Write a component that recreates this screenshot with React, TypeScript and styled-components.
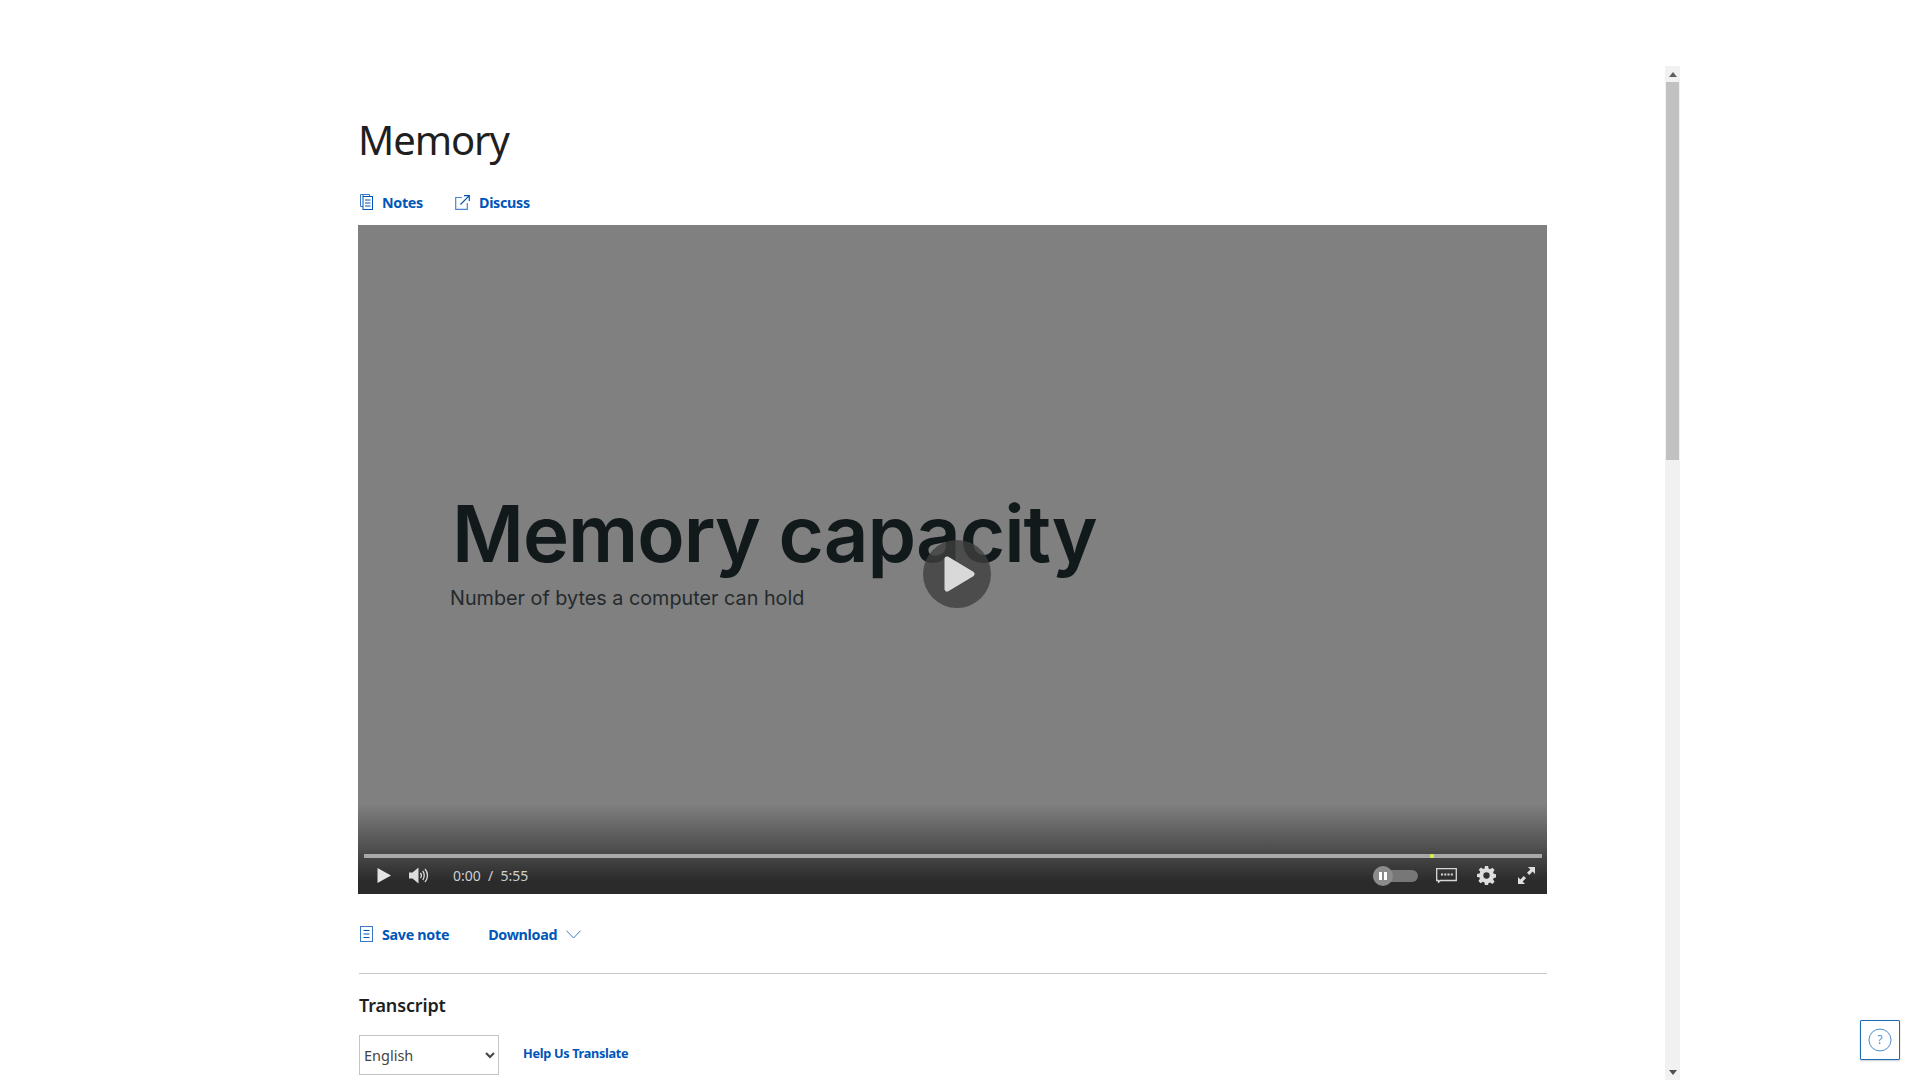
import styled, { createGlobalStyle } from 'styled-components'

const GlobalStyle = createGlobalStyle`
  * {
    box-sizing: border-box;
  }

  html,
  body {
    margin: 0;
    height: 100%;
    background-color: #ffffff;
    overflow: hidden;
    font-family: 'Noto Sans', 'Open Sans', sans-serif;
  }
`

const Pagina = styled.div`
  display: flex;
  width: 1440px;
  height: 1080px;
  margin: 0 auto;
  padding-top: 66px;
`

const Painel = styled.main`
  flex: 1;
  overflow: hidden;
  padding-left: 118px;
`

const BarraRolagem = styled.div`
  display: flex;
  flex-direction: column;
  width: 15px;
  background-color: #f1f1f1;
`

const SetaRolagem = styled.div`
  display: flex;
  align-items: center;
  justify-content: center;
  height: 16px;
`

const Polegar = styled.div`
  width: 13px;
  height: 378px;
  margin-left: 1px;
  background-color: #c1c1c1;
`

const TrilhaRolagem = styled.div`
  flex: 1;
`

const Conteudo = styled.div`
  width: 1189px;
  padding-top: 49px;
`

const Titulo = styled.h1`
  margin: 0;
  font-size: 40px;
  line-height: 50px;
  font-weight: 400;
  letter-spacing: -1.1px;
  color: #1f1f1f;
`

const BarraLinks = styled.div<{ $gap: number; $topo: number }>`
  display: flex;
  align-items: center;
  gap: ${(p) => p.$gap}px;
  margin-top: ${(p) => p.$topo}px;
  height: 24px;
  padding-left: 2px;
`

const LinkAcao = styled.a`
  display: flex;
  align-items: center;
  gap: 9px;
  font-size: 14.3px;
  font-weight: 700;
  letter-spacing: -0.3px;
  color: #0056b8;
  text-decoration: none;
  cursor: pointer;
`

const Video = styled.section`
  position: relative;
  margin-top: 11px;
  height: 669px;
  background-color: #808080;
  overflow: hidden;
`

const Slide = styled.div`
  position: absolute;
  left: 94px;
  top: 261px;
  color: #12191b;
`

const SlideTitulo = styled.div`
  font-family: Inter, sans-serif;
  font-size: 78px;
  line-height: 96px;
  font-weight: 600;
  letter-spacing: -1px;
`

const SlideSub = styled.div`
  font-family: Inter, sans-serif;
  font-size: 19.8px;
  line-height: 24px;
  margin-top: 4px;
  margin-left: -2px;
  color: #242a2c;
`

const BotaoPlay = styled.button`
  position: absolute;
  left: 565px;
  top: 315px;
  width: 68px;
  height: 68px;
  border: none;
  border-radius: 50%;
  padding: 0 0 0 4px;
  background-color: rgba(62, 62, 62, 0.8);
  display: flex;
  align-items: center;
  justify-content: center;
`

const Controles = styled.div`
  position: absolute;
  left: 0;
  right: 0;
  bottom: 0;
  height: 90px;
  background: linear-gradient(to bottom, rgba(43, 43, 43, 0), #2b2b2b 85%);
  display: flex;
  flex-direction: column;
  justify-content: flex-end;
`

const Progresso = styled.div`
  position: relative;
  height: 4px;
  margin: 0 5px 0 6px;
  background-color: #a8a8a8;
`

const Marcador = styled.span`
  position: absolute;
  top: 0;
  height: 4px;
  width: 4px;
  background-color: #d8e94a;
`

const LinhaControles = styled.div`
  display: flex;
  align-items: center;
  height: 36px;
  padding: 0 12px 1px 19px;
`

const BotaoIcone = styled.span<{ $margem?: number }>`
  display: flex;
  align-items: center;
  justify-content: center;
  margin-left: ${(p) => p.$margem ?? 0}px;
`

const Tempo = styled.span`
  margin-left: 23px;
  font-size: 14px;
  color: #cfcfcf;
  white-space: pre;
`

const Espaco = styled.div`
  flex: 1;
`

const Alternador = styled.div`
  position: relative;
  width: 45px;
  height: 12px;
  border-radius: 6px;
  background-color: #777777;
`

const Pino = styled.span`
  position: absolute;
  left: 0;
  top: -4px;
  width: 20px;
  height: 20px;
  border-radius: 50%;
  background-color: #8c8c8c;
  display: flex;
  align-items: center;
  justify-content: center;
  gap: 2px;

  &::before,
  &::after {
    content: '';
    width: 3px;
    height: 8px;
    background-color: #ffffff;
  }
`

const Divisor = styled.hr`
  margin: 27px 0 0 1px;
  border: none;
  border-top: 1px solid #c8c8c8;
`

const Subtitulo = styled.h2`
  margin: 17px 0 0 1px;
  font-size: 18px;
  line-height: 28px;
  font-weight: 600;
  letter-spacing: -0.15px;
  color: #1f1f1f;
`

const LinhaIdioma = styled.div`
  display: flex;
  align-items: center;
  gap: 24px;
  margin: 16px 0 0 1px;
`

const SeletorIdioma = styled.select`
  width: 140px;
  height: 40px;
  border: 1px solid #c4c4c4;
  background-color: #ffffff;
  font-family: 'Noto Sans', sans-serif;
  font-size: 14.5px;
  color: #444444;
  padding: 0;
`

const LinkTraducao = styled.a`
  margin-top: -4px;
  font-size: 12.7px;
  font-weight: 700;
  letter-spacing: -0.3px;
  color: #0056b8;
  cursor: pointer;
`

const BotaoAjuda = styled.button`
  position: fixed;
  left: 1860px;
  top: 1020px;
  width: 40px;
  height: 40px;
  padding: 0;
  background-color: #ffffff;
  border: 1px solid #1d69b4;
  border-radius: 1px;
  box-shadow: 0 1px 2px rgba(0, 0, 0, 0.2);
  display: flex;
  align-items: center;
  justify-content: center;
`

const IconeNotas = () => (
  <svg width="13" height="16" viewBox="0 0 13 16" fill="none" stroke="#3b78c6" strokeWidth="1">
    <path d="M3 2.500V.5H9.500V2.500M3 12.500H.5V.5H3" />
    <rect x="3" y="2.500" width="9.500" height="13" stroke="#0056b8" />
    <path d="M5 6h5.500M5 9h5.500M5 12h5.500" stroke="#0056b8" />
  </svg>
)

const IconeExterno = () => (
  <svg width="15" height="15" viewBox="0 0 15 15" fill="none" stroke="#4a86cf" strokeWidth="1.2">
    <path d="M7 2.500H.7v11.800h11.600V8" />
    <path d="M5.500 9.500L13.800 1.200M9 .7h5.300V6" stroke="#0056b8" />
  </svg>
)

const IconeNota = () => (
  <svg width="13" height="16" viewBox="0 0 13 16" fill="none" stroke="#0056b8" strokeWidth="1">
    <rect x=".5" y=".5" width="12" height="15" stroke="#3b78c6" />
    <path d="M3.500 4.500h6M3.500 8h6M3.500 11.500h6" />
  </svg>
)

const IconeSeta = () => (
  <svg width="15" height="9" viewBox="0 0 15 9" fill="none" stroke="#3b78c6" strokeWidth="1">
    <path d="M.5 .7L7.500 8l7-7.300" />
  </svg>
)

const IconePlayGrande = () => (
  <svg width="31" height="36" viewBox="0 0 31 36">
    <path d="M3 3L28 18 3 33z" fill="#d9d9d9" stroke="#d9d9d9" strokeWidth="5" strokeLinejoin="round" />
  </svg>
)

const IconePlay = () => (
  <svg width="14" height="15" viewBox="0 0 14 15">
    <path d="M.5 0L14 7.500.5 15z" fill="#e4e4e4" />
  </svg>
)

const IconeVolume = () => (
  <svg width="21" height="17" viewBox="0 0 21 17" fill="none">
    <path d="M0 5.500h3.500L9.500 .5v16l-6-5H0z" fill="#dddddd" />
    <path d="M11.500 6c1 1.400 1 3.600 0 5M13.700 4c2 2.500 2 6.500 0 9M16 2c3.300 3.600 3.300 9.400 0 13" stroke="#dddddd" strokeWidth="1.300" />
  </svg>
)

const IconeLegenda = () => (
  <svg width="21" height="15" viewBox="0 0 21 15" fill="none">
    <path d="M20.300 .7H.7v11.800h1.800v1.800l1.800-1.800h16z" stroke="#d8d8d8" strokeWidth="1.300" />
    <path d="M5 6.500h2M8.300 6.500h2M11.500 6.500h2M14.800 6.500h2" stroke="#d8d8d8" strokeWidth="2" />
  </svg>
)

const IconeEngrenagem = () => (
  <svg width="19" height="19" viewBox="0 0 24 24">
    <path
      fillRule="evenodd"
      fill="#dedede"
      d="M10 0h4l.6 3.300 2 .8L19.400 2.200l2.800 2.800-1.900 2.800.8 2 3.300.6v4l-3.300.6-.8 2 1.900 2.800-2.800 2.800-2.800-1.900-2 .8L14 24h-4l-.6-3.300-2-.8-2.800 1.900-2.800-2.800 1.900-2.800-.8-2L0 14v-4l3.300-.6.8-2L2.200 4.600 5 1.800l2.800 1.900 2-.8zM12 8a4 4 0 1 0 0 8 4 4 0 0 0 0-8z"
    />
  </svg>
)

const IconeTelaCheia = () => (
  <svg width="17" height="17" viewBox="0 0 17 17" fill="#dedede">
    <path d="M10 0h7v7l-2.400-2.400-3.400 3.400-2.200-2.200 3.400-3.400zM7 17H0v-7l2.400 2.400 3.400-3.400 2.200 2.200-3.400 3.400z" />
  </svg>
)

const IconeAjuda = () => (
  <svg width="24" height="24" viewBox="0 0 24 24">
    <circle cx="12" cy="12" r="11" fill="none" stroke="#4f8fd0" strokeWidth="1" />
    <text x="12" y="16" textAnchor="middle" fontSize="12" fontFamily="Noto Sans, sans-serif" fill="#4f8fd0">
      ?
    </text>
  </svg>
)

const App = () => {
  return (
    <>
      <GlobalStyle />
      <Pagina>
        <Painel>
          <Conteudo>
            <Titulo>Memory</Titulo>
            <BarraLinks $gap={32} $topo={25}>
              <LinkAcao>
                <IconeNotas />
                Notes
              </LinkAcao>
              <LinkAcao>
                <IconeExterno />
                Discuss
              </LinkAcao>
            </BarraLinks>
            <Video>
              <Slide>
                <SlideTitulo>Memory capacity</SlideTitulo>
                <SlideSub>Number of bytes a computer can hold</SlideSub>
              </Slide>
              <BotaoPlay aria-label="Play">
                <IconePlayGrande />
              </BotaoPlay>
              <Controles>
                <Progresso>
                  <Marcador style={{ left: `${(1066 / 1178) * 100}%` }} />
                </Progresso>
                <LinhaControles>
                  <BotaoIcone>
                    <IconePlay />
                  </BotaoIcone>
                  <BotaoIcone $margem={18}>
                    <IconeVolume />
                  </BotaoIcone>
                  <Tempo>0:00  /  5:55</Tempo>
                  <Espaco />
                  <Alternador>
                    <Pino />
                  </Alternador>
                  <BotaoIcone $margem={18}>
                    <IconeLegenda />
                  </BotaoIcone>
                  <BotaoIcone $margem={20}>
                    <IconeEngrenagem />
                  </BotaoIcone>
                  <BotaoIcone $margem={22}>
                    <IconeTelaCheia />
                  </BotaoIcone>
                </LinhaControles>
              </Controles>
            </Video>
            <BarraLinks $gap={39} $topo={28}>
              <LinkAcao>
                <IconeNota />
                Save note
              </LinkAcao>
              <LinkAcao>
                Download
                <IconeSeta />
              </LinkAcao>
            </BarraLinks>
            <Divisor />
            <Subtitulo>Transcript</Subtitulo>
            <LinhaIdioma>
              <SeletorIdioma defaultValue="English">
                <option>English</option>
              </SeletorIdioma>
              <LinkTraducao>Help Us Translate</LinkTraducao>
            </LinhaIdioma>
          </Conteudo>
        </Painel>
        <BarraRolagem>
          <SetaRolagem>
            <svg width="8" height="5" viewBox="0 0 8 5">
              <path d="M4 0l4 5H0z" fill="#606060" />
            </svg>
          </SetaRolagem>
          <Polegar />
          <TrilhaRolagem />
          <SetaRolagem>
            <svg width="8" height="5" viewBox="0 0 8 5">
              <path d="M0 0h8L4 5z" fill="#505050" />
            </svg>
          </SetaRolagem>
        </BarraRolagem>
      </Pagina>
      <BotaoAjuda aria-label="Help">
        <IconeAjuda />
      </BotaoAjuda>
    </>
  )
}

export default App
